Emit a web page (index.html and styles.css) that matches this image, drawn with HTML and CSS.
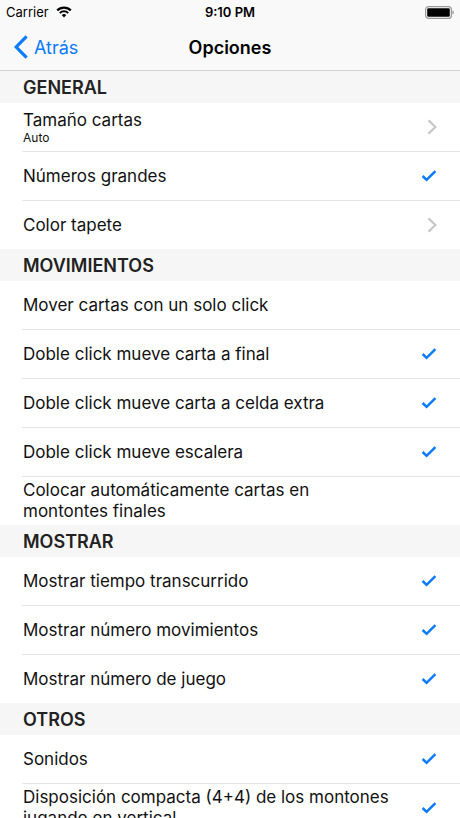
FILE: index.html
```html
<!DOCTYPE html>
<html lang="es">
<head>
	<meta charset="UTF-8">
	<meta name="viewport" content="width=device-width, initial-scale=1">
	<title>Opciones</title>
	<link rel="stylesheet" href="styles.css">
</head>
<body>
	<svg class="symbols" aria-hidden="true">
		<symbol id="check" viewBox="0 0 16 14">
			<path d="M1.6 7 L5.6 10.8 L14.4 2.2" fill="none" stroke="currentColor" stroke-width="2.5"/>
		</symbol>
		<symbol id="chevron" viewBox="0 0 10 16">
			<path d="M1.4 1.4 L8.4 8 L1.4 14.6" fill="none" stroke="currentColor" stroke-width="2.2"/>
		</symbol>
	</svg>

	<header class="top">
		<div class="status">
			<div class="carrier">
				<span>Carrier</span>
				<svg class="wifi" viewBox="0 0 16 12" aria-hidden="true">
					<path d="M1.2 4.4 A9.6 9.6 0 0 1 14.8 4.4" fill="none" stroke="#000" stroke-width="2.2"/>
					<path d="M3.8 7.1 A5.9 5.9 0 0 1 12.2 7.1" fill="none" stroke="#000" stroke-width="2"/>
					<path d="M5.7 9.1 A3.3 3.3 0 0 1 10.3 9.1 L8 11.6 Z" fill="#000"/>
				</svg>
			</div>
			<span class="time">9:10 PM</span>
			<svg class="battery" viewBox="0 0 29 13" aria-hidden="true">
				<rect x="0.6" y="0.6" width="25.8" height="11.8" rx="3" fill="none" stroke="#999" stroke-width="1.2"/>
				<rect x="2.2" y="2.2" width="22.6" height="8.6" rx="1.4" fill="#000"/>
				<path d="M27.4 4.4 Q29 5 29 6.5 Q29 8 27.4 8.6 Z" fill="#999"/>
			</svg>
		</div>
		<nav class="bar">
			<a class="back" href="#">
				<svg viewBox="0 0 14 24" aria-hidden="true">
					<path d="M12.6 1.4 L2.2 12 L12.6 22.6" fill="none" stroke="currentColor" stroke-width="3.2"/>
				</svg>
				<span>Atrás</span>
			</a>
			<h1>Opciones</h1>
		</nav>
	</header>

	<main class="options">
		<section>
			<h2>GENERAL</h2>
			<ul>
				<li><button class="row" type="button">
					<span class="text">Tamaño cartas<small>Auto</small></span>
					<svg class="chevron"><use href="#chevron"/></svg>
				</button></li>
				<li><label class="row">
					<span class="text">Números grandes</span>
					<input type="checkbox" checked>
					<svg class="check"><use href="#check"/></svg>
				</label></li>
				<li><button class="row" type="button">
					<span class="text">Color tapete</span>
					<svg class="chevron"><use href="#chevron"/></svg>
				</button></li>
			</ul>
		</section>

		<section>
			<h2>MOVIMIENTOS</h2>
			<ul>
				<li><label class="row">
					<span class="text">Mover cartas con un solo click</span>
					<input type="checkbox">
					<svg class="check"><use href="#check"/></svg>
				</label></li>
				<li><label class="row">
					<span class="text">Doble click mueve carta a final</span>
					<input type="checkbox" checked>
					<svg class="check"><use href="#check"/></svg>
				</label></li>
				<li><label class="row">
					<span class="text">Doble click mueve carta a celda extra</span>
					<input type="checkbox" checked>
					<svg class="check"><use href="#check"/></svg>
				</label></li>
				<li><label class="row">
					<span class="text">Doble click mueve escalera</span>
					<input type="checkbox" checked>
					<svg class="check"><use href="#check"/></svg>
				</label></li>
				<li><label class="row">
					<span class="text">Colocar automáticamente cartas en montontes finales</span>
					<input type="checkbox">
					<svg class="check"><use href="#check"/></svg>
				</label></li>
			</ul>
		</section>

		<section>
			<h2>MOSTRAR</h2>
			<ul>
				<li><label class="row">
					<span class="text">Mostrar tiempo transcurrido</span>
					<input type="checkbox" checked>
					<svg class="check"><use href="#check"/></svg>
				</label></li>
				<li><label class="row">
					<span class="text">Mostrar número movimientos</span>
					<input type="checkbox" checked>
					<svg class="check"><use href="#check"/></svg>
				</label></li>
				<li><label class="row">
					<span class="text">Mostrar número de juego</span>
					<input type="checkbox" checked>
					<svg class="check"><use href="#check"/></svg>
				</label></li>
			</ul>
		</section>

		<section>
			<h2>OTROS</h2>
			<ul>
				<li><label class="row">
					<span class="text">Sonidos</span>
					<input type="checkbox" checked>
					<svg class="check"><use href="#check"/></svg>
				</label></li>
				<li><label class="row">
					<span class="text">Disposición compacta (4+4) de los montones jugando en vertical</span>
					<input type="checkbox" checked>
					<svg class="check"><use href="#check"/></svg>
				</label></li>
			</ul>
		</section>
	</main>
</body>
</html>
```

FILE: styles.css
```css
* {
	box-sizing: border-box;
}

body {
	display: flex;
	flex-direction: column;
	height: 100vh;
	margin: 0;
	background-color: #ffffff;
	color: #111111;
	font-family: Inter, Roboto, sans-serif;
	font-size: 17px;
	line-height: 21px;
}

.symbols {
	display: none;
}

/* status bar + navigation bar */
.top {
	flex: none;
	border-bottom: 1px solid #d2d2d4;
	background-color: #f9f9f9;
	color: #000000;
}

.status {
	display: grid;
	grid-template-columns: 1fr auto 1fr;
	align-items: center;
	height: 24px;
	padding: 0 6px;
	font-size: 13px;
}

.carrier {
	display: flex;
	align-items: center;
	gap: 7px;
}

.wifi {
	width: 16px;
	height: 12px;
}

.time {
	font-weight: 600;
}

.battery {
	justify-self: end;
	width: 29px;
	height: 13px;
}

.bar {
	display: grid;
	grid-template-columns: 1fr auto 1fr;
	align-items: center;
	height: 46px;
	padding: 0 14px;
}

.back {
	display: flex;
	align-items: center;
	gap: 6px;
	color: #0a7aff;
	font-size: 18px;
	text-decoration: none;
}

.back svg {
	width: 14px;
	height: 24px;
}

h1 {
	margin: 0;
	font-size: 18px;
	font-weight: 600;
}

/* option list */
.options {
	flex: 1;
	min-height: 0;
	overflow-y: auto;
	scrollbar-width: none;
}

h2 {
	margin: 0;
	padding: 6px 23px 5px;
	background-color: #f6f6f6;
	color: #222222;
	font-size: 18px;
	font-weight: 600;
	line-height: 21px;
}

ul {
	margin: 0;
	padding: 0 0 0 22px;
	list-style: none;
}

li + li {
	border-top: 1px solid #e4e4e6;
}

.row {
	display: flex;
	align-items: center;
	justify-content: space-between;
	gap: 24px;
	width: 100%;
	min-height: 48px;
	padding: 3px 23px 3px 1px;
	border: none;
	background: none;
	color: inherit;
	font: inherit;
	text-align: left;
}

.text {
	flex: 1;
}

.text small {
	display: block;
	font-size: 12px;
	line-height: 14px;
}

.row input {
	position: absolute;
	appearance: none;
	margin: 0;
	opacity: 0;
}

.check {
	width: 16px;
	height: 14px;
	color: #0a7aff;
	visibility: hidden;
}

input:checked + .check {
	visibility: visible;
}

.chevron {
	width: 10px;
	height: 16px;
	color: #c7c7cc;
}
```
